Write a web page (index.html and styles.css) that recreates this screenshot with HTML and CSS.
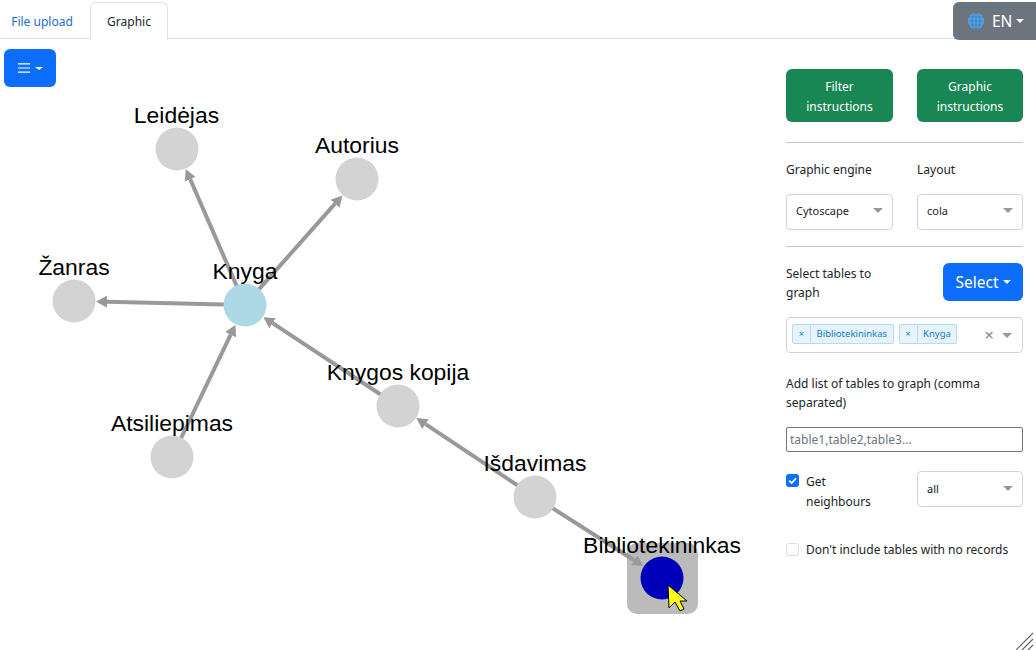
FILE: index.html
```html
<!DOCTYPE html>
<html lang="en">
<head>
<meta charset="utf-8">
<title>Graphic</title>
<link rel="stylesheet" href="styles.css">
</head>
<body>
<header class="tabs">
  <a class="tab">File upload</a>
  <a class="tab active">Graphic</a>
  <button class="lang">
    <svg class="globe" viewBox="0 0 20 20" width="18" height="18">
      <circle cx="10" cy="10" r="9" fill="#5aa5e0"/>
      <g fill="none" stroke="#2f78b8" stroke-width=".8">
        <ellipse cx="10" cy="10" rx="4.5" ry="9"/>
        <path d="M10 1v18M1 10h18M2.5 5.5h15M2.5 14.5h15"/>
      </g>
    </svg>
    <span>EN</span><i class="caret"></i>
  </button>
</header>
<main class="main">
  <section class="canvas">
    <button class="menu-btn">
      <svg viewBox="0 0 14 12" width="13" height="12"><path d="M0 1.5h13M0 6h13M0 10.5h13" stroke="#fff" stroke-width="1.2"/></svg>
      <i class="caret small"></i>
    </button>
    <svg class="graph" viewBox="0 39 776 611" width="776" height="611">
      <defs>
        <marker id="arrow" markerUnits="userSpaceOnUse" markerWidth="12" markerHeight="13" refX="0" refY="6.5" orient="auto">
          <path d="M0 0.5L11 6.5L0 12.5Z" fill="#999"/>
        </marker>
      </defs>
      <rect x="627" y="543" width="71" height="71" rx="10" fill="#bbb"/>
      <g class="edges">
        <line x1="245" y1="305" x2="190.2" y2="179.3" marker-end="url(#arrow)"/>
        <line x1="245" y1="305" x2="335.1" y2="203.7" marker-end="url(#arrow)"/>
        <line x1="245" y1="305" x2="107" y2="301.8" marker-end="url(#arrow)"/>
        <line x1="172" y1="457" x2="230.7" y2="334.7" marker-end="url(#arrow)"/>
        <line x1="398" y1="406" x2="272.6" y2="323.2" marker-end="url(#arrow)"/>
        <line x1="535" y1="497" x2="425.5" y2="424.2" marker-end="url(#arrow)"/>
        <line x1="535" y1="497" x2="634.2" y2="560.2" marker-end="url(#arrow)"/>
      </g>
      <g class="nodes">
        <circle cx="177" cy="149" r="21.5"/>
        <circle cx="357" cy="179" r="21.5"/>
        <circle cx="74" cy="301" r="21.5"/>
        <circle cx="172" cy="457" r="21.5"/>
        <circle cx="398" cy="406" r="21.5"/>
        <circle cx="535" cy="497" r="21.5"/>
        <circle class="node-main" cx="245" cy="305" r="21.5"/>
        <circle class="node-sel" cx="662" cy="578" r="21.5"/>
      </g>
      <g class="labels">
        <text x="176.5" y="123">Leidėjas</text>
        <text x="357" y="153">Autorius</text>
        <text x="74" y="275">Žanras</text>
        <text x="245" y="279">Knyga</text>
        <text x="172" y="431">Atsiliepimas</text>
        <text x="398" y="380">Knygos kopija</text>
        <text x="535" y="471">Išdavimas</text>
        <text x="662" y="553">Bibliotekininkas</text>
      </g>
      <path class="pointer" d="M668 585L669 608L675 602L680 611L684 609L680 601L687 601Z"/>
    </svg>
  </section>
  <aside class="side">
    <div class="row buttons">
      <button class="green">Filter<br>instructions</button>
      <button class="green">Graphic<br>instructions</button>
    </div>
    <hr class="rule">
    <div class="row engines">
      <div class="field">
        <label class="lbl">Graphic engine</label>
        <div class="select">Cytoscape<i class="arr"></i></div>
      </div>
      <div class="field">
        <label class="lbl">Layout</label>
        <div class="select">cola<i class="arr"></i></div>
      </div>
    </div>
    <hr class="rule">
    <div class="select-row">
      <span class="lbl-wrap">Select tables to graph</span>
      <button class="blue">Select<i class="caret"></i></button>
    </div>
    <div class="multi">
      <span class="tag"><b>×</b><span>Bibliotekininkas</span></span>
      <span class="tag"><b>×</b><span>Knyga</span></span>
      <span class="clear">×</span><i class="arr"></i>
    </div>
    <p class="para">Add list of tables to graph (comma separated)</p>
    <input class="text" placeholder="table1,table2,table3...">
    <div class="row neighbours">
      <div class="check-wrap">
        <span class="box on"><svg viewBox="0 0 12 12" width="13" height="13"><path d="M3 6.2l2.2 2.2L9.2 4" fill="none" stroke="#fff" stroke-width="1.6"/></svg></span>
        <span class="check-text">Get<br>neighbours</span>
      </div>
      <div class="select">all<i class="arr"></i></div>
    </div>
    <div class="norec"><span class="box"></span><span>Don't include tables with no records</span></div>
  </aside>
</main>
<svg class="grip" viewBox="0 0 20 20" width="20" height="20"><path d="M0 20L17 3M6 20L17 9M12 20L17 15" stroke="#666" stroke-width="1.2"/></svg>
</body>
</html>
```
FILE: styles.css
```css
* { box-sizing: border-box; }
html, body { margin: 0; height: 100%; overflow: hidden; }
body { font-family: "Noto Sans", "Open Sans", sans-serif; font-size: 12px; color: #212529; background: #fff; position: relative; width: 1036px; height: 650px; }
button { font-family: inherit; border: 0; color: #fff; }

.tabs { display: flex; height: 39px; border-bottom: 1px solid #dee2e6; padding-top: 2px; }
.tab { width: 84px; height: 37px; line-height: 39px; text-align: center; color: #1a6fc9; margin-right: 6px; }
.tab.active { width: 78px; height: 38px; background: #fff; color: #212529; border: 1px solid #dee2e6; border-bottom-color: #fff; border-radius: 6px 6px 0 0; line-height: 37px; }
.lang { margin-left: auto; width: 83px; height: 38px; background: #6c757d; border-radius: 6px 0 0 6px; display: flex; align-items: center; justify-content: flex-start; gap: 4px; font-size: 15.5px; position: relative; z-index: 1; padding: 0 0 0 14px; }
.globe { display: block; margin-right: 3px; }
.caret { display: inline-block; width: 0; height: 0; border-top: 4.5px solid #fff; border-left: 4.5px solid transparent; border-right: 4.5px solid transparent; }
.caret.small { border-top-width: 3.5px; border-left-width: 4px; border-right-width: 4px; }

.main { display: flex; height: 611px; }
.canvas { position: relative; width: 776px; flex: none; }
.graph { display: block; }
.menu-btn { position: absolute; left: 4px; top: 10px; width: 52px; height: 38px; background: #0d6efd; border-radius: 6px; display: flex; align-items: center; justify-content: center; gap: 4px; padding: 0; }
.edges line { stroke: #999; stroke-width: 4; }
.nodes circle { fill: #d3d3d3; }
.nodes .node-main { fill: #add8e6; }
.nodes .node-sel { fill: #0000bb; }
.labels text { font-family: "Liberation Sans", Arial, sans-serif; font-size: 22.9px; fill: #000; text-anchor: middle; }
.pointer { fill: #ffff1a; stroke: #000; stroke-width: 1; }

.side { width: 260px; flex: none; padding: 30px 13px 0 10px; }
.row { display: flex; justify-content: space-between; }
.green { width: 107px; height: 53px; background: #198754; border-radius: 6px; font-size: 12px; line-height: 20px; padding: 2px 0 0; }
.buttons .green:last-child { width: 106px; }
.rule { border: 0; border-top: 1px solid #c8c8c8; margin: 20px 0 0; }
.engines { margin-top: 18px; }
.field { width: 107px; }
.field:last-child { width: 106px; }
.lbl { display: block; line-height: 18px; margin-bottom: 15px; }
.select { height: 36px; border: 1px solid #ced4da; border-radius: 4px; display: flex; align-items: center; justify-content: space-between; padding: 0 9px 3px 9px; font-size: 11px; }
.arr { display: inline-block; width: 0; height: 0; border-top: 5px solid #999; border-left: 5px solid transparent; border-right: 5px solid transparent; }
.engines + .rule { margin-top: 16px; }
.select-row { display: flex; justify-content: space-between; align-items: flex-start; margin-top: 16px; }
.lbl-wrap { width: 110px; line-height: 19px; margin-top: 1px; }
.blue { width: 80px; height: 38px; background: #0d6efd; border-radius: 6px; font-size: 15.5px; display: flex; align-items: center; justify-content: center; gap: 4px; padding: 0; }
.multi { margin-top: 15px; height: 36px; border: 1px solid #ced4da; border-radius: 4px; display: flex; align-items: center; padding: 0 10px 0 5px; gap: 5px; }
.tag { display: flex; height: 20px; border: 1px solid #b3dcf2; background: #e6f3fb; color: #0d80c0; border-radius: 2px; font-size: 9.5px; line-height: 18px; margin-top: -2px; }
.tag b { font-weight: 400; width: 18px; text-align: center; border-right: 1px solid #b3dcf2; }
.tag span { padding: 0 5.5px; }
.clear { margin-left: auto; font-size: 17px; color: #888; line-height: 20px; margin-right: 3px; }
.para { margin: 21px 0 0; line-height: 19px; }
.text { display: block; width: 100%; height: 25px; margin-top: 15px; border: 1px solid #767676; border-radius: 2px; padding: 0 3px; font: inherit; }
.text::placeholder { color: #6c757d; }
.neighbours { margin-top: 19px; }
.neighbours .select { width: 106px; padding-bottom: 1px; }
.check-wrap { display: flex; }
.box { display: block; width: 13px; height: 13px; border: 1px solid #ddd; border-radius: 3px; background: #fff; flex: none; }
.box.on { background: #0d6efd; border: 0; margin-top: 3px; }
.box svg { display: block; }
.check-text { margin-left: 7px; line-height: 20px; margin-top: 1px; }
.norec { display: flex; align-items: center; gap: 7px; margin-top: 28px; height: 18px; }
.grip { position: absolute; right: 0; bottom: 0; }
```
